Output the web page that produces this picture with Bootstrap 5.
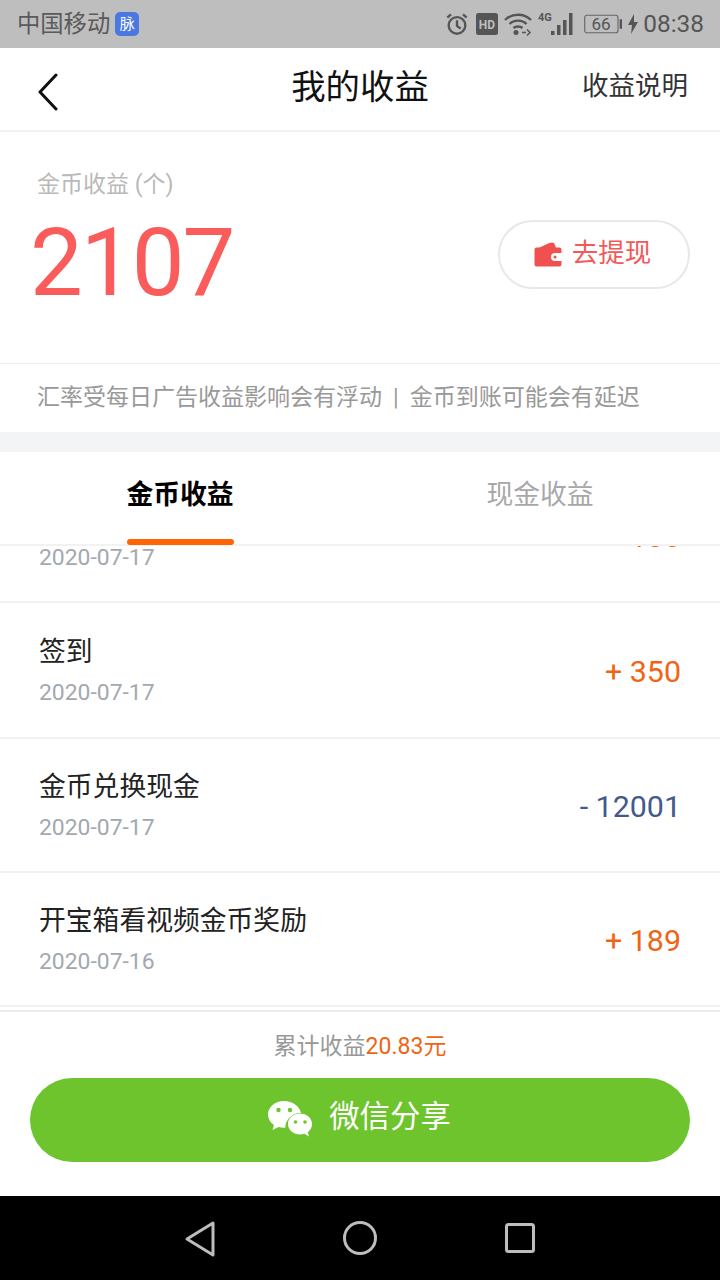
<!DOCTYPE html>
<html lang="zh">
<head>
<meta charset="utf-8">
<title>我的收益</title>
<link href="https://cdn.jsdelivr.net/npm/bootstrap@5.3.0/dist/css/bootstrap.min.css" rel="stylesheet">
<style>
html,body{height:100%;}
body{font-family:Roboto,"Noto Sans CJK SC",sans-serif;background:#fff;color:#111;}
.screen{width:720px;height:1280px;overflow:hidden;}
.sbar{height:48px;background:#bebebe;color:#555;padding:0 16px 0 17px;flex:none;}
.carrier{font-size:23.300px;line-height:48px;color:#5a5a5a;}
.mai{width:24px;height:24px;background:#4a78e0;color:#fff;border-radius:5px;font-size:15px;line-height:24px;text-align:center;margin-left:5px;}
.clock{font-size:24.400px;color:#555;line-height:48px;margin-left:5px;}
.hd-ic{margin-left:7px;}
.wifi-ic{margin-left:6px;}
.sig-ic{margin-left:6px;}
.bat-ic{margin-left:10px;}
.bolt-ic{margin-left:6px;}
.tbar{height:84px;border-bottom:2px solid #f2f2f2;flex:none;padding:0 32px 0 37px;position:relative;}
.back-ic{margin-top:6px;}
.ttl{position:absolute;left:0;right:0;top:16px;text-align:center;font-size:34.400px;line-height:46px;color:#111;}
.help{font-size:26.500px;color:#333;line-height:36px;margin-bottom:6px;}
.earn{height:232px;flex:none;border-bottom:1px solid #ececec;padding:0 30px;position:relative;}
.earn-lbl{font-size:23px;color:#b9b9b9;line-height:32px;padding:37px 0 0 7px;}
.earn-num{font-size:94px;font-weight:400;color:#fa5c5c;line-height:112px;margin-top:6px;letter-spacing:-2px;}
.draw{width:192px;height:69px;border:2px solid #e8e8e8;border-radius:35px;color:#f05a5a;font-size:26.500px;margin-top:88px;gap:10px;padding:0 3px 4px 0;}
.draw svg{margin-top:3px;}
.note{height:68px;flex:none;padding-left:37px;font-size:23px;line-height:68px;color:#999;}
.sep-bar{margin:0 11px 0 11px;}
.gap-band{height:20px;background:#f3f4f6;flex:none;}
.tabsr{height:94px;flex:none;border-bottom:2px solid #f2f2f2;}
.tabi{width:360px;text-align:center;font-size:26.800px;line-height:86px;color:#a8a8a8;position:relative;}
.tabi.on{color:#000;font-weight:700;}
.tabi.on::after{content:"";position:absolute;left:127px;width:107px;height:6px;bottom:-1px;background:#ff6505;border-radius:3px;}
.rows{flex:1 1 auto;overflow:hidden;min-height:0;}
.rows-in{margin-top:-77px;}
.rowi{height:134px;border-bottom:2px solid #f2f2f2;padding:2px 39px 0;}
.rowi.tall{height:136px;}
.r-t{font-size:26.800px;line-height:36px;color:#222;}
.r-d{font-size:22.900px;line-height:30px;color:#a3a8b0;margin-top:8px;}
.r-a{font-size:30.400px;color:#f06414;margin-top:2px;}
.r-a.neg{color:#43598e;}
.foot{height:186px;flex:none;border-top:2px solid #ececec;padding:0 30px;}
.tot{font-size:23px;color:#999;line-height:32px;padding-top:19px;text-align:center;}
.tot span{color:#f06414;}
.share{height:84px;margin-top:15px;border:0;border-radius:42px;background:#6dc42c;color:#fff;font-size:30.400px;width:100%;padding:0 2px 6px 0;}
.share svg{margin-top:4px;}
.nbar{height:84px;background:#000;flex:none;}
</style>
</head>
<body>
<div class="screen d-flex flex-column">
  <div class="sbar d-flex align-items-center justify-content-between">
    <div class="d-flex align-items-center"><span class="carrier">中国移动</span><span class="mai">脉</span></div>
    <div class="d-flex align-items-center">
      <svg width="24" height="26" viewBox="0 0 26 26" fill="none" stroke="#555" stroke-width="2.600"><circle cx="13" cy="14.500" r="9"/><path d="M13 9v6l4 3M2.500 6l4-3.500M23.500 6l-4-3.500"/></svg>
      <svg class="hd-ic" width="22" height="22" viewBox="0 0 22 22"><rect width="22" height="22" rx="2.500" fill="#555"/><text x="11" y="16" font-size="12" font-weight="700" text-anchor="middle" fill="#bebebe" font-family="Roboto,sans-serif">HD</text></svg>
      <svg class="wifi-ic" width="28" height="24" viewBox="0 0 28 24" fill="none" stroke="#555" stroke-width="2.400"><path d="M1 8c7-7 19-7 26 0M5.500 12c4.500-4.500 12.500-4.500 17 0M9.500 16c2.500-2 6.500-2 9 0"/><circle cx="12" cy="20.500" r="2.500" fill="#555" stroke="none"/><path d="M18 20.500h4M23 17.500l3 3-3 3" stroke-width="1.500"/></svg>
      <svg class="sig-ic" width="36" height="26" viewBox="0 0 36 26"><text x="0" y="10" font-size="11" font-weight="700" fill="#555" font-family="Roboto,sans-serif">4G</text><g fill="#555"><rect x="13" y="20" width="3.500" height="4"/><rect x="19" y="14" width="3.500" height="10"/><rect x="25" y="9" width="3.500" height="15"/><rect x="31" y="2" width="3.500" height="22"/></g></svg>
      <svg class="bat-ic" width="38" height="22" viewBox="0 0 40 22"><rect x=".75" y="1.750" width="35" height="18.500" rx="2.500" fill="none" stroke="#666" stroke-width="1.200"/><rect x="37.500" y="6" width="2.500" height="10" fill="#555"/><text x="18" y="17" font-size="18" text-anchor="middle" fill="#555" font-family="Roboto,sans-serif">66</text></svg>
      <svg class="bolt-ic" width="10" height="20" viewBox="0 0 10 20"><path d="M6 0 0 11h4l-1 9 7-12H6z" fill="#555"/></svg>
      <span class="clock">08:38</span>
    </div>
  </div>

  <div class="tbar d-flex align-items-center justify-content-between">
    <svg class="back-ic" width="22" height="38" viewBox="0 0 22 38" fill="none" stroke="#111" stroke-width="3" stroke-linecap="round" stroke-linejoin="round"><path d="M19 2 3 19l16 17"/></svg>
    <div class="ttl">我的收益</div>
    <div class="help">收益说明</div>
  </div>

  <div class="earn d-flex justify-content-between">
    <div>
      <div class="earn-lbl">金币收益 (个)</div>
      <div class="earn-num">2107</div>
    </div>
    <div class="draw d-flex align-items-center justify-content-center">
      <svg width="28" height="26" viewBox="0 0 28 26"><path d="M5 7C9 5 14 2 18 1.500c1.500-.2 2.500 1 3 2.500l1 3z" fill="#f0504f"/><path d="M2.500 6.500h23a2 2 0 0 1 2 2V12H21a4 4 0 0 0 0 8h6.500v3.500a2 2 0 0 1-2 2h-23a2 2 0 0 1-2-2v-15a2 2 0 0 1 2-2z" fill="#f0504f"/><circle cx="21" cy="16" r="1.500" fill="#f0504f"/></svg>
      <span>去提现</span>
    </div>
  </div>
  <div class="note">汇率受每日广告收益影响会有浮动<span class="sep-bar">|</span>金币到账可能会有延迟</div>
  <div class="gap-band"></div>

  <div class="tabsr d-flex">
    <div class="tabi on">金币收益</div>
    <div class="tabi">现金收益</div>
  </div>

  <div class="rows">
    <div class="rows-in">
      <div class="rowi d-flex align-items-center justify-content-between">
        <div><div class="r-t">签到</div><div class="r-d">2020-07-17</div></div>
        <div class="r-a">+ 100</div>
      </div>
      <div class="rowi tall d-flex align-items-center justify-content-between">
        <div><div class="r-t">签到</div><div class="r-d">2020-07-17</div></div>
        <div class="r-a">+ 350</div>
      </div>
      <div class="rowi d-flex align-items-center justify-content-between">
        <div><div class="r-t">金币兑换现金</div><div class="r-d">2020-07-17</div></div>
        <div class="r-a neg">- 12001</div>
      </div>
      <div class="rowi d-flex align-items-center justify-content-between">
        <div><div class="r-t">开宝箱看视频金币奖励</div><div class="r-d">2020-07-16</div></div>
        <div class="r-a">+ 189</div>
      </div>
    </div>
  </div>

  <div class="foot">
    <div class="tot">累计收益<span>20.83元</span></div>
    <button type="button" class="btn share d-flex align-items-center justify-content-center gap-3">
      <svg width="46" height="38" viewBox="0 0 46 38"><path d="M17 1C8 1 1 7 1 14.500c0 4.300 2.300 8 6 10.500l-1.500 5 6-3c1.800.5 3.500.8 5.500.8h1.300C18 21 24.500 13 33 13h1C32.700 6 25.500 1 17 1z" fill="#fff"/><path d="M45 24c0-6-5.500-10.500-12-10.500S21 18 21 24s5.500 10.500 12 10.500c1.500 0 3-.3 4.300-.7l4.700 2.700-1.200-4.200C43.300 30.300 45 27.300 45 24z" fill="#fff"/><g fill="#6dc42c"><circle cx="11.500" cy="10" r="2.200"/><circle cx="23" cy="10" r="2.200"/><circle cx="28.500" cy="22" r="1.800"/><circle cx="38" cy="22" r="1.800"/></g></svg>
      <span>微信分享</span>
    </button>
  </div>

  <div class="nbar d-flex align-items-center position-relative">
    <svg width="720" height="84" viewBox="0 0 720 84" fill="none" stroke="#bdbdbd" stroke-width="3" stroke-linejoin="round"><path d="M213 27v32l-26-16z"/><circle cx="360" cy="42" r="15.500"/><rect x="506.500" y="28.500" width="27" height="27" rx="2"/></svg>
  </div>
</div>
<script src="https://cdn.jsdelivr.net/npm/bootstrap@5.3.0/dist/js/bootstrap.bundle.min.js"></script>
</body>
</html>
